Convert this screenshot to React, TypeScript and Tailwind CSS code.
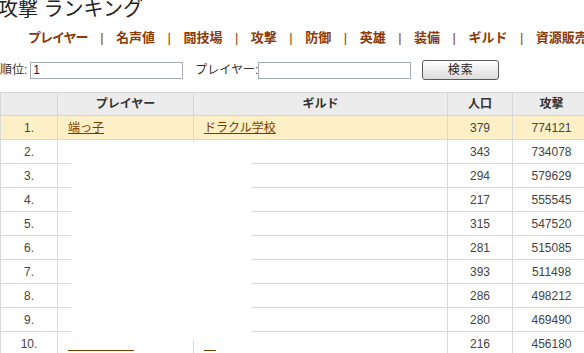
import React from 'react';

const navItems = ['プレイヤー', '名声値', '闘技場', '攻撃', '防御', '英雄', '装備', 'ギルド', '資源販売'];

const rows = [
  { rank: 1, player: '端っ子', guild: 'ドラクル学校', pop: 379, atk: 774121 },
  { rank: 2, player: '', guild: '', pop: 343, atk: 734078 },
  { rank: 3, player: '', guild: '', pop: 294, atk: 579629 },
  { rank: 4, player: '', guild: '', pop: 217, atk: 555545 },
  { rank: 5, player: '', guild: '', pop: 315, atk: 547520 },
  { rank: 6, player: '', guild: '', pop: 281, atk: 515085 },
  { rank: 7, player: '', guild: '', pop: 393, atk: 511498 },
  { rank: 8, player: '', guild: '', pop: 286, atk: 498212 },
  { rank: 9, player: '', guild: '', pop: 280, atk: 469490 },
  { rank: 10, player: '', guild: '', pop: 216, atk: 456180 },
];

export default function App() {
  return (
    <div className="relative w-[584px] h-[353px] overflow-hidden bg-white text-[#333] font-['Liberation_Sans','Noto_Sans_CJK_JP',sans-serif]">
      {/* Title */}
      <h1 className="-ml-[2px] -mt-[3px] text-[20px] leading-[24px] text-[#222] whitespace-nowrap">攻撃 ランキング</h1>

      {/* Nav */}
      <nav className="mt-[9px] pl-[28px] flex items-center whitespace-nowrap text-[13px] leading-[16px] font-bold text-[#8b3a0a]">
        {navItems.map((item, i) => (
          <React.Fragment key={item}>
            {i > 0 && <span className="mx-[12.5px] font-normal">|</span>}
            <a className={`cursor-pointer ${i === 0 ? 'tracking-[-1px]' : ''}`}>{item}</a>
          </React.Fragment>
        ))}
      </nav>

      {/* Search form */}
      <div className="mt-[14px] flex items-center h-[20px] text-[12px] whitespace-nowrap">
        <span>順位:</span>
        <input
          defaultValue="1"
          className="ml-[3px] w-[153px] h-[17px] border border-[#a5acb5] px-[2px] text-[12px] text-[#222] outline-none"
        />
        <span className="ml-[12px]">プレイヤー:</span>
        <input className="w-[153px] h-[17px] border border-[#a5acb5] px-[2px] text-[12px] outline-none" />
        <button className="ml-[11px] w-[77px] h-[20px] rounded-[3px] border border-[#5a5a5a] bg-gradient-to-b from-white to-[#dcdcdc] text-[12px] leading-[16px] tracking-[1px] text-[#222]">
          検索
        </button>
      </div>

      {/* Ranking table */}
      <table className="mt-[12px] border-collapse table-fixed w-[590px] text-[12px]">
        <colgroup>
          <col className="w-[57px]" />
          <col className="w-[136px]" />
          <col className="w-[254px]" />
          <col className="w-[65px]" />
          <col className="w-[78px]" />
        </colgroup>
        <thead>
          <tr className="h-[23px] bg-[#ececec]">
            <th className="border border-[#d6d6d6]"></th>
            <th className="border border-[#d6d6d6] font-bold">プレイヤー</th>
            <th className="border border-[#d6d6d6] font-bold">ギルド</th>
            <th className="border border-[#d6d6d6] font-bold">人口</th>
            <th className="border border-[#d6d6d6] font-bold">攻撃</th>
          </tr>
        </thead>
        <tbody className="text-[#444]">
          {rows.map((r) => (
            <tr key={r.rank} className={`h-[24px] ${r.rank === 1 ? 'bg-[#fdf0c6]' : 'bg-white'}`}>
              <td className="border border-[#d9d9d9] text-center">{r.rank}.</td>
              <td className="border border-[#d9d9d9] pl-[10px]">
                {r.player && <a className="text-[#7a3a00] underline cursor-pointer">{r.player}</a>}
                {r.rank === 10 && <span className="inline-block w-[66px] h-[14px] border-b border-[#7a3a00] align-middle" />}
              </td>
              <td className="border border-[#d9d9d9] pl-[10px]">
                {r.guild && <a className="text-[#7a3a00] underline cursor-pointer">{r.guild}</a>}
                {r.rank === 10 && <span className="inline-block w-[12px] h-[14px] border-b border-[#7a3a00] align-middle" />}
              </td>
              <td className="border border-[#d9d9d9] text-center">{r.pop}</td>
              <td className="border border-[#d9d9d9] text-center">{r.atk}</td>
            </tr>
          ))}
        </tbody>
      </table>

      {/* Redacted area painted over the table */}
      <div className="absolute left-[71px] top-[142px] w-[180px] h-[198px] bg-white" />
    </div>
  );
}
